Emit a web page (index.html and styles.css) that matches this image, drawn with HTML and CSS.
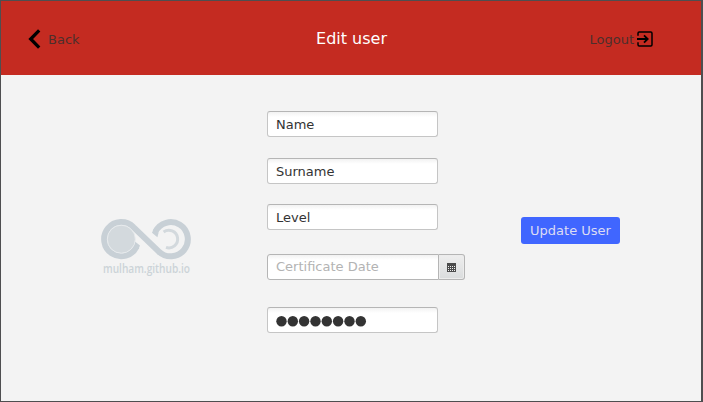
FILE: index.html
```html
<!DOCTYPE html>
<html lang="en">
<head>
<meta charset="utf-8">
<title>Edit user</title>
<link rel="stylesheet" href="styles.css">
</head>
<body>
<div class="window">
  <header class="header">
    <a class="nav back"><svg width="13" height="20" viewBox="0 0 13 20"><path d="M11.2 1.4 2.7 10l8.5 8.6" fill="none" stroke="#000" stroke-width="3.3"/></svg><span>Back</span></a>
    <h1 class="title">Edit user</h1>
    <a class="nav logout"><span>Logout</span><svg width="16" height="16" viewBox="0 0 16 16" fill="none" stroke="#000"><path d="M1 4.8V2.2Q1 1 2.2 1h11.6Q15 1 15 2.2v11.6q0 1.2-1.2 1.2H2.2Q1 15 1 13.8v-2.6" stroke-width="1.5"/><path d="M0 8h10M7 4.3 10.7 8 7 11.7" stroke-width="1.8"/></svg></a>
  </header>
  <main class="content">
    <div class="brand">
      <svg class="logo" width="92" height="66" viewBox="0 0 92 66">
        <path d="M35.6 27.7A17.1 17.1 0 1 1 32.4 8.1L57.6 32.3A17.1 17.1 0 1 0 54.4 12.7" fill="none" stroke="#c8d0d6" stroke-width="6"/>
        <path d="M33.6 22.2 39 26.6 37.6 30 32.4 26.6zM56.4 18.2 51 13.8 52.4 10.4 57.6 13.8z" fill="#c8d0d6"/>
        <circle cx="20.3" cy="20.2" r="14" fill="#d3d9dd" stroke="#e8ebed" stroke-width=".9"/>
        <path d="M62.6 13A8.8 8.8 0 1 1 65 28.4" fill="none" stroke="#d3d9dd" stroke-width="3"/>
        <text class="brand-name" x="2" y="54" textLength="87" lengthAdjust="spacingAndGlyphs">mulham.github.io</text>
      </svg>
    </div>
    <form class="form">
      <div class="field">Name</div>
      <div class="field surname">Surname</div>
      <div class="field level">Level</div>
      <div class="date">
        <div class="field placeholder">Certificate Date</div>
        <div class="picker"><svg width="9" height="9" viewBox="0 0 9 9"><path d="M0 0h9v9H0z" fill="#4b4b4b"/><path d="M1 3.5h7M1 5.5h7M1 7.5h7" stroke="#eee" stroke-dasharray="1 1"/></svg></div>
      </div>
      <div class="field password"><svg width="92" height="12" viewBox="0 0 92 12" fill="#333"><circle cx="5.5" cy="6.3" r="5.2"/><circle cx="16.8" cy="6.3" r="5.2"/><circle cx="28.1" cy="6.3" r="5.2"/><circle cx="39.5" cy="6.3" r="5.2"/><circle cx="50.8" cy="6.3" r="5.2"/><circle cx="62.1" cy="6.3" r="5.2"/><circle cx="73.5" cy="6.3" r="5.2"/><circle cx="84.8" cy="6.3" r="5.2"/></svg></div>
    </form>
    <div class="actions"><div class="update">Update User</div></div>
  </main>
</div>
</body>
</html>
```
FILE: styles.css
```css
* { box-sizing: border-box; }
body { margin: 0; font: 13px/16px "DejaVu Sans", sans-serif; color: #333; }
svg { display: block; flex: none; }
.window {
  width: 703px; height: 402px;
  border: 1px solid #4e4e50; border-right-width: 2px;
  background: #f3f3f3;
}
.header {
  height: 74px; background: #c42b21;
  display: grid; grid-template-columns: 266px 168px 266px; align-items: center;
}
.nav { display: flex; align-items: center; color: #4c2f2c; }
.back { padding-left: 27px; gap: 7px; padding-top: 1px; }
.back span { padding-top: 2px; }
.logout { justify-content: flex-end; padding: 2px 48px 0 0; gap: 3px; }
.logout span { padding-top: 2px; }
.title { margin: 0; font-size: 16px; line-height: 20px; font-weight: 400; text-align: center; color: #fff; padding: 1px 0 0 1px; }
.content { display: grid; grid-template-columns: 266px 254px 1fr; height: 326px; }
.brand { padding: 144px 0 0 100px; }
.logo { overflow: visible; }
.brand-name { font: 600 12px "Open Sans", sans-serif; fill: #ccd3d8; }
.form { padding-top: 36px; }
.field {
  width: 171px; height: 26px; padding: 5px 8px 0; white-space: nowrap;
  border: 1px solid #c5c5c5; border-top-color: #b5b5b5; border-radius: 3px;
  background: linear-gradient(#f2f2f2, #fff 5px);
}
.surname { margin-top: 21px; }
.level { margin-top: 20px; }
.date { display: flex; margin-top: 24px; }
.date .field { width: 172px; border-color: #b5b5b5; border-radius: 3px 0 0 3px; padding-top: 4px; }
.placeholder { color: #b3b3b3; }
.picker {
  width: 26px; height: 26px; border: 1px solid #b5b5b5; border-left: 0;
  border-radius: 0 3px 3px 0; box-shadow: inset 0 0 0 1px #ececec;
  background: linear-gradient(#eee, #dadcdd);
  display: flex; align-items: center; justify-content: center;
}
.password { margin-top: 27px; padding-top: 7px; }
.actions { padding-top: 142px; }
.update {
  width: 99px; height: 27px; border-radius: 3px; background: #4066ff;
  color: #dcdcf3; text-align: center; line-height: 27px;
}
```
